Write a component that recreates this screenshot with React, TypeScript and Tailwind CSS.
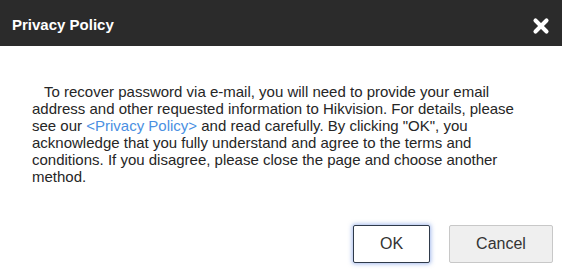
import { X } from 'lucide-react';

export default function App() {
  return (
    <div className="relative w-[562px] h-[273px] overflow-hidden bg-white font-['Liberation_Sans',Arial,sans-serif]">
      <div className="flex h-[46px] items-center justify-between bg-[#2b2b2b] pl-3 pr-[10px] pt-[5px]">
        <h1 className="text-[15px] font-bold text-white">Privacy Policy</h1>
        <X className="h-[22px] w-[22px] text-white" strokeWidth={4.5} />
      </div>

      <div className="pl-8 pr-[44px] pt-[37px]">
        <p className="indent-[12px] text-[15px] leading-[17px] text-[#262626]">
          To recover password via e-mail, you will need to provide your email address and other requested
          information to Hikvision. For details, please see our{' '}
          <span className="text-[#4a90e2]">&lt;Privacy Policy&gt;</span> and read carefully. By clicking "OK", you
          acknowledge that you fully understand and agree to the terms and conditions. If you disagree, please
          close the page and choose another method.
        </p>
      </div>

      <div className="absolute bottom-[10px] right-[9px] flex gap-[19px]">
        <button className="h-[38px] w-[77px] rounded-[2px] border border-[#2f3a4a] bg-white text-[16px] text-[#333] shadow-[0_0_4px_1px_rgba(90,130,220,0.55)]">
          OK
        </button>
        <button className="h-[38px] w-[104px] rounded-[2px] border border-[#c8c8c8] bg-[#efefef] text-[16px] text-[#333]">
          Cancel
        </button>
      </div>
    </div>
  );
}
